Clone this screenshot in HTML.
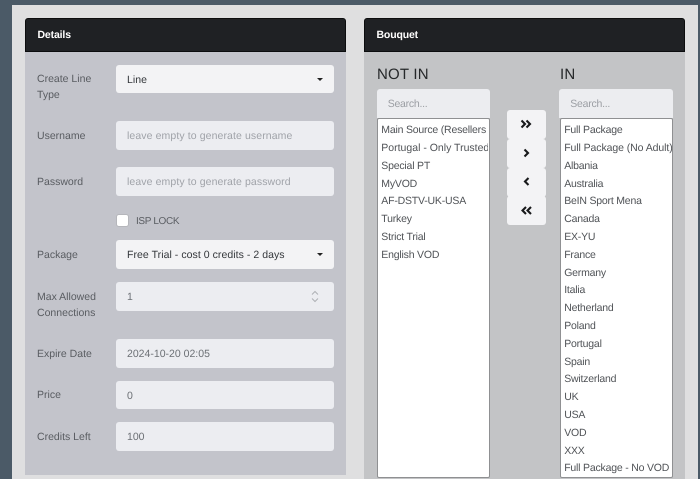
<!DOCTYPE html>
<html>
<head>
<meta charset="utf-8">
<style>
html,body{margin:0;padding:0;width:700px;height:479px;overflow:hidden;background:#4b5a67}
body{font-family:"Liberation Sans",sans-serif;font-size:10.5px;position:relative;text-rendering:geometricPrecision}
div,span{position:absolute;box-sizing:border-box;white-space:nowrap}
#r{left:0;top:0;width:700px;height:479px;overflow:hidden;filter:blur(.35px)}
.hd{background:#1f2124;border:1px solid #0c0d0e;border-radius:3px 3px 0 0;color:#fff;font-weight:bold;font-size:10.5px;height:34px;top:18px;line-height:33px;padding-left:11.5px;letter-spacing:-.15px}
.l{left:37px;color:#595c61;font-size:10.5px;line-height:15.5px;margin-top:1px}
.f{left:116px;width:218px;height:28.5px;background:#ecedf1;border-radius:3px;line-height:30px;padding-left:11px;color:#6c7075}
.d{background:#f3f3f5;color:#33363a;letter-spacing:.05px}
.p{color:#a0a3a9;letter-spacing:.1px}
.c{width:0;height:0;left:316.5px;border:3.5px solid transparent;border-top:3.5px solid #222;border-bottom:0}
.s{width:113.4px;height:28.5px;top:89px;background:#ecedf0;border-radius:3px 3px 0 0;padding-left:11px;line-height:30px;color:#9b9ea3;letter-spacing:-.25px}
.b{width:113px;top:118px;height:360px;background:#fff;border:1px solid #8f9092;border-radius:2px;overflow:hidden}
.i{left:3.5px;color:#505357;font-size:10.5px;line-height:18px;height:18px;letter-spacing:-.2px;margin-top:.7px}
.t{top:66px;font-size:15px;line-height:18px;color:#26282a;letter-spacing:.2px}
.bt{left:507px;width:39px;height:29px;background:#f3f3f5;border-radius:3px}
</style>
</head>
<body>
<div id="r">
<div style="left:12px;top:5px;width:686px;height:474px;background:#dfdfe0"></div>

<div style="left:25px;top:51px;width:321px;height:424px;background:#c3c4cb"></div>
<div class="hd" style="left:25px;width:321px">Details</div>

<div class="l" style="top:71px;white-space:normal;width:70px">Create Line<br>Type</div>
<div class="f d" style="top:64.5px">Line</div>
<div class="c" style="top:77.5px"></div>

<div class="l" style="top:128px">Username</div>
<div class="f p" style="top:121px">leave empty to generate username</div>

<div class="l" style="top:173.5px">Password</div>
<div class="f p" style="top:167px">leave empty to generate password</div>

<div style="left:116px;top:213.5px;width:13px;height:13.5px;background:#fff;border:1px solid #b5b6bb;border-radius:3px"></div>
<div class="l" style="left:136px;top:212.5px;font-size:10px;letter-spacing:-.35px">ISP LOCK</div>

<div class="l" style="top:247px">Package</div>
<div class="f d" style="top:240px">Free Trial - cost 0 credits - 2 days</div>
<div class="c" style="top:253px"></div>

<div class="l" style="top:289px;white-space:normal;width:75px">Max Allowed<br>Connections</div>
<div class="f" style="top:282px">1</div>
<svg style="position:absolute;left:310px;top:290px" width="10" height="13" viewBox="0 0 10 13"><path d="M2 4.5 5 1.5 8 4.5M2 8.5 5 11.5 8 8.5" fill="none" stroke="#aeb0b5" stroke-width="1"/></svg>

<div class="l" style="top:345.5px">Expire Date</div>
<div class="f" style="top:339px">2024-10-20 02:05</div>

<div class="l" style="top:387px">Price</div>
<div class="f" style="top:380.5px">0</div>

<div class="l" style="top:428.5px">Credits Left</div>
<div class="f" style="top:422px">100</div>

<div style="left:364px;top:51px;width:321px;height:428px;background:#c3c4c6"></div>
<div class="hd" style="left:364px;width:321px">Bouquet</div>

<div class="t" style="left:377px">NOT IN</div>
<div class="t" style="left:560px">IN</div>
<div class="s" style="left:376.7px">Search...</div>
<div class="s" style="left:559.3px">Search...</div>

<div class="b" style="left:376.8px">
<div class="i" style="top:1.5px;width:107px;overflow:hidden">Main Source (Resellers</div>
<div class="i" style="top:19.3px;width:107px;overflow:hidden;letter-spacing:0">Portugal - Only Trusted</div>
<div class="i" style="top:37.1px">Special PT</div>
<div class="i" style="top:54.9px">MyVOD</div>
<div class="i" style="top:72.7px">AF-DSTV-UK-USA</div>
<div class="i" style="top:90.5px">Turkey</div>
<div class="i" style="top:108.3px">Strict Trial</div>
<div class="i" style="top:126.1px">English VOD</div>
</div>

<div class="b" style="left:559.7px">
<div class="i" style="top:1.5px">Full Package</div>
<div class="i" style="top:19.3px;width:108px;overflow:hidden;letter-spacing:-.08px">Full Package (No Adult)</div>
<div class="i" style="top:37.1px">Albania</div>
<div class="i" style="top:54.9px">Australia</div>
<div class="i" style="top:72.7px">BeIN Sport Mena</div>
<div class="i" style="top:90.5px">Canada</div>
<div class="i" style="top:108.3px">EX-YU</div>
<div class="i" style="top:126.1px">France</div>
<div class="i" style="top:143.9px">Germany</div>
<div class="i" style="top:161.7px">Italia</div>
<div class="i" style="top:179.5px">Netherland</div>
<div class="i" style="top:197.3px">Poland</div>
<div class="i" style="top:215.1px">Portugal</div>
<div class="i" style="top:232.9px">Spain</div>
<div class="i" style="top:250.7px">Switzerland</div>
<div class="i" style="top:268.5px">UK</div>
<div class="i" style="top:286.3px">USA</div>
<div class="i" style="top:304.1px">VOD</div>
<div class="i" style="top:321.9px">XXX</div>
<div class="i" style="top:339.7px">Full Package - No VOD</div>
</div>

<div class="bt" style="top:110px"></div>
<div class="bt" style="top:139px"></div>
<div class="bt" style="top:167.5px"></div>
<div class="bt" style="top:196px"></div>
<svg style="position:absolute;left:507px;top:110px" width="39" height="116" viewBox="0 0 39 116">
<g fill="none" stroke="#17181a" stroke-width="2.1">
<path d="M14.5 10.5 18 14 14.5 17.5M19.5 10.5 23 14 19.5 17.5"/>
<path d="M17.5 39.5 21 43 17.5 46.5"/>
<path d="M21.5 68 18 71.5 21.5 75"/>
<path d="M19 97 15.5 100.5 19 104M24 97 20.5 100.5 24 104"/>
</g>
</svg>
</div>
</body>
</html>
